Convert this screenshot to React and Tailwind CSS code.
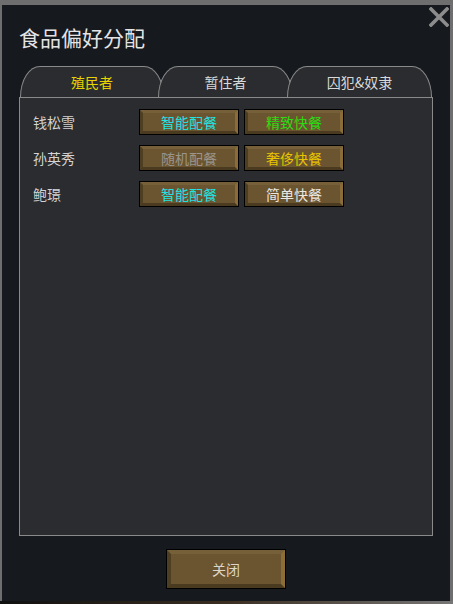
import React from 'react';

const colonists = [
  { name: '钱松雪', plan: { label: '智能配餐', color: 'text-[#1fe3e3]' }, meal: { label: '精致快餐', color: 'text-[#2bdc12]' } },
  { name: '孙英秀', plan: { label: '随机配餐', color: 'text-[#9a958c]' }, meal: { label: '奢侈快餐', color: 'text-[#e8c400]' } },
  { name: '鲍璟', plan: { label: '智能配餐', color: 'text-[#1fe3e3]' }, meal: { label: '简单快餐', color: 'text-[#ece8e0]' } },
];

const tabs = [
  { label: '殖民者', width: 'w-[144px]', active: true },
  { label: '暂住者', width: 'w-[135px]', active: false },
  { label: '囚犯&奴隶', width: 'w-[145px]', active: false },
];

// 小按钮 (木纹斜边)
const SmallButton = ({ children, color }) => (
  <div className="w-[100px] h-[26px] border border-black">
    <div className={`flex h-full items-center justify-center bg-[#6b5430] border-[3px] border-t-[#76603a] border-l-[#4f3f22] border-r-[#8a6c38] border-b-[#4a3a20] text-[14px] leading-none ${color}`}>
      {children}
    </div>
  </div>
);

const Tab = ({ label, width, active, first }) => (
  <div
    className={`${width} h-[31px] ${first ? '' : '-ml-[6px]'} flex items-center justify-center bg-[#2b2c2f] border border-b-0 border-[#8a8a8a] rounded-t-[20px_31px] text-[14px] ${active ? 'text-[#e6d400]' : 'text-[#d8d8d8]'}`}
  >
    {label}
  </div>
);

export default function App() {
  return (
    <div
      className="w-[453px] h-[604px] bg-[#6e6e6e] flex flex-col overflow-hidden"
      style={{ fontFamily: '"Noto Sans CJK SC", "Noto Sans", sans-serif' }}
    >
      <div className="relative ml-[2px] mt-[5px] w-[448px] h-[596px] bg-[#16191e] flex flex-col">
        {/* 关闭图标 */}
        <svg className="absolute top-[2px] right-[1px]" width="20" height="20" viewBox="0 0 20 20">
          <path d="M2 2 L18 18 M18 2 L2 18" stroke="#8c8c8c" strokeWidth="3.6" strokeLinecap="square" />
        </svg>

        <div className="mt-[18px] ml-[17px] text-[21px] leading-[28px] text-[#e4e4e4]">食品偏好分配</div>

        <div className="mt-[15px] ml-[18px] flex">
          {tabs.map((t, i) => (
            <Tab key={t.label} {...t} first={i === 0} />
          ))}
        </div>

        <div className="ml-[17px] w-[414px] h-[439px] bg-[#2b2c2f] border border-[#8a8a8a] pt-[11px] pl-[13px] flex flex-col gap-[10px]">
          {colonists.map((c) => (
            <div key={c.name} className="flex items-center">
              <div className="w-[106px] text-[14px] text-[#d4d4d4]">{c.name}</div>
              <div className="flex gap-[5px]">
                <SmallButton color={c.plan.color}>{c.plan.label}</SmallButton>
                <SmallButton color={c.meal.color}>{c.meal.label}</SmallButton>
              </div>
            </div>
          ))}
        </div>

        <div className="mt-[13px] flex justify-center">
          <div className="w-[120px] h-[40px] border border-black">
            <div className="flex h-full items-center justify-center bg-[#6b5430] border-[4px] border-t-[#76603a] border-l-[#4f3f22] border-r-[#8c6d38] border-b-[#4a3a20] text-[14px] text-[#ddd6c8]">
              关闭
            </div>
          </div>
        </div>
      </div>
      <div className="h-[3px] bg-gradient-to-r from-[#101010] via-[#3a2e20] to-[#777777]" />
    </div>
  );
}
